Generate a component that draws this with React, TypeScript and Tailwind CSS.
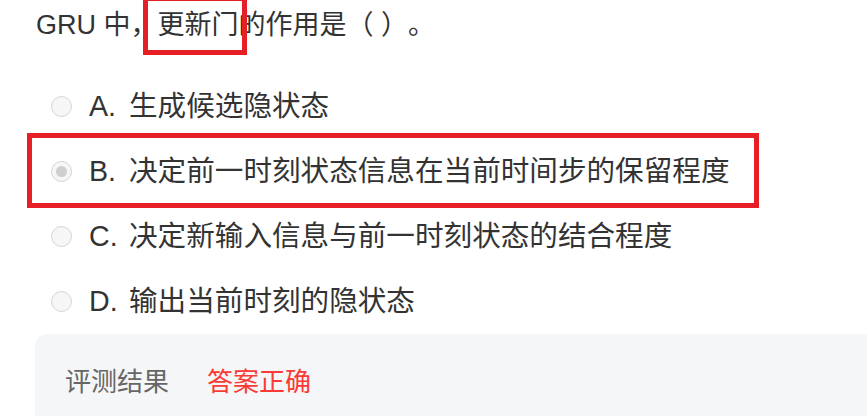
const options = [
  { key: "A", text: "生成候选隐状态" },
  { key: "B", text: "决定前一时刻状态信息在当前时间步的保留程度", picked: true },
  { key: "C", text: "决定新输入信息与前一时刻状态的结合程度" },
  { key: "D", text: "输出当前时刻的隐状态" },
]

function Radio({ checked }: { checked?: boolean }) {
  return (
    <span className="flex h-[21px] w-[21px] shrink-0 items-center justify-center rounded-full border-[1.5px] border-[#d4d4d4] bg-[#f6f6f6]">
      {checked && <span className="h-[11px] w-[11px] rounded-full bg-[#cfcfcf]" />}
    </span>
  )
}

export default function App() {
  return (
    <div className="h-[416px] w-[867px] overflow-hidden bg-white font-['Liberation_Sans','Noto_Sans_CJK_SC',sans-serif] text-[#333] [text-spacing-trim:space-all]">
      <div className="h-[45px] pl-[36px] pt-[5px] text-[27px] leading-[40px]">
        GRU 中，
        <span className="relative">
          <span className="absolute -left-[15px] -right-[8px] -top-[14px] -bottom-[15px] border-[5px] border-[#e61f26]" />
          更新门
        </span>
        的作用是（ ）。
      </div>

      <div className="mt-[29px] flex flex-col">
        {options.map((o) => (
          <div key={o.key} className="relative flex h-[65px] items-center pl-[51px] text-[28.6px]">
            {o.picked && (
              <span className="absolute left-[27px] top-[-6px] h-[75px] w-[732px] border-[5px] border-[#e61f26]" />
            )}
            <Radio checked={o.picked} />
            <span className="ml-[17px] w-[40px]">{o.key}.</span>
            <span>{o.text}</span>
          </div>
        ))}
      </div>

      <div className="ml-[35px] h-[120px] rounded-l-xl bg-[#f5f6f8] pl-[30px] pt-[30px] text-[26px] leading-[36px]">
        <span className="text-[#666]">评测结果</span>
        <span className="ml-[38px] text-[#fa3a35]">答案正确</span>
      </div>
    </div>
  )
}
